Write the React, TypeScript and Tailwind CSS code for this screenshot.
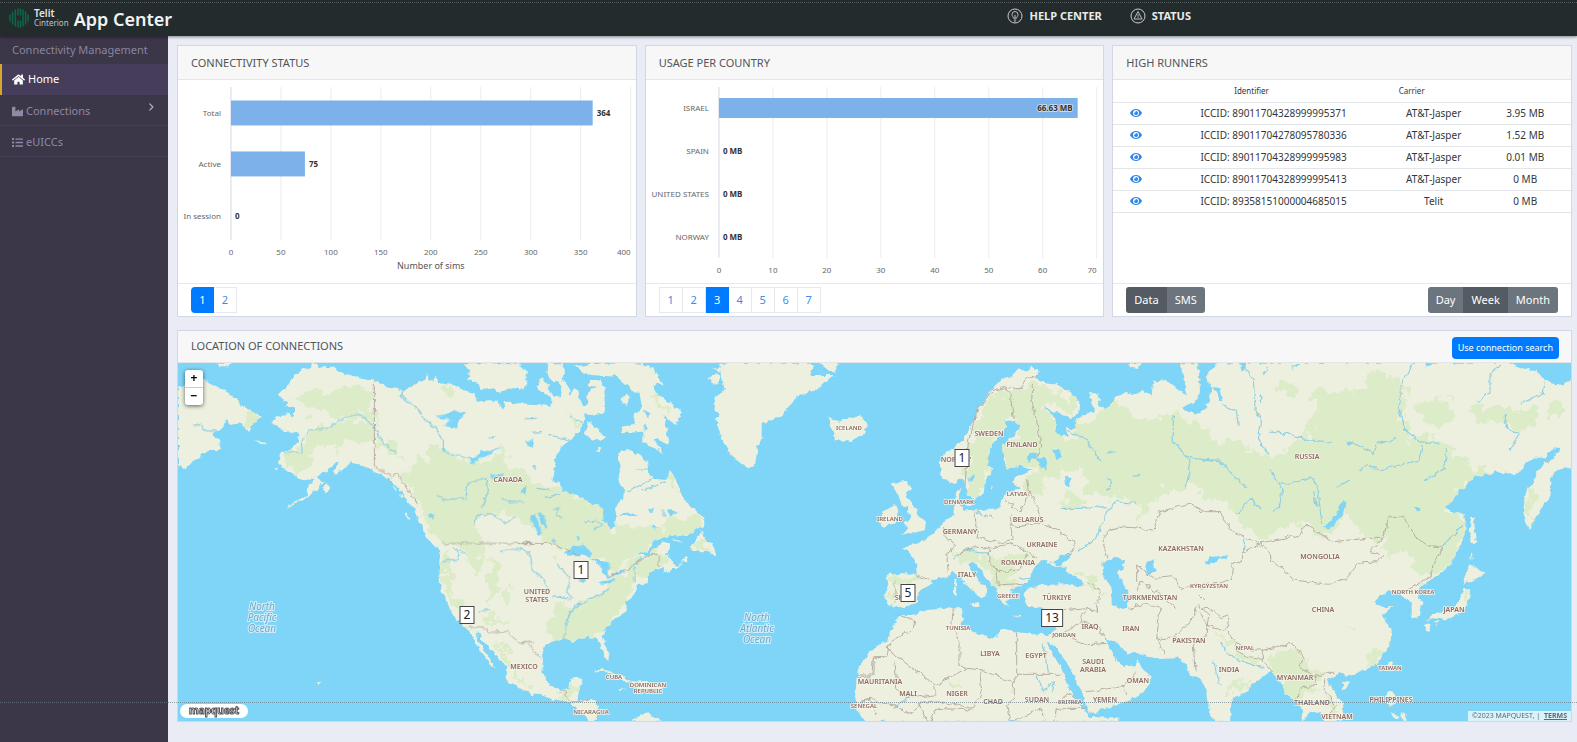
import type { ReactNode } from "react";
import { FaHome, FaIndustry, FaList, FaEye } from "react-icons/fa";
import { FaAngleRight } from "react-icons/fa6";

const WATER = "#7fd5f7";
const RIVER = "#8fcfe3";
const LAND = "#edf0de";
const FOREST = "#dcebc8";
const BORDER = "#b3a8a1";

function Card({ title, action, children, footer }: { title: string; action?: ReactNode; children: ReactNode; footer?: ReactNode }) {
  return (
    <section className="flex min-w-0 flex-col border border-[#d3d7e4] bg-white">
      <header
        className={
          action
            ? "flex h-8 items-center justify-between border-b border-[#e3e5e8] bg-[#f7f7f7] pr-3 pl-[13px]"
            : "flex h-[34px] items-center border-b border-[#e3e5e8] bg-[#f7f7f7] px-[13px] pt-[2px]"
        }
      >
        <h2 className="text-[11px] text-[#50555b]">{title}</h2>
        {action}
      </header>
      {children}
      {footer && <footer className="flex h-[33px] items-center justify-between border-t border-[#e6e8eb] px-[13px]">{footer}</footer>}
    </section>
  );
}

function Pager({ count, current, label }: { count: number; current: number; label: string }) {
  return (
    <nav aria-label={label} className="flex">
      {Array.from({ length: count }, (_, i) => i + 1).map((n) => (
        <button
          key={n}
          type="button"
          className={
            n === current
              ? "h-[26px] w-[23px] bg-[#007bff] text-[11px] text-white first:rounded-l-sm"
              : "h-[26px] w-[23px] border-y border-r border-[#e6e9ed] text-[11px] text-[#3d8ee6] first:w-6 first:border-l"
          }
        >
          {n}
        </button>
      ))}
    </nav>
  );
}

function Toggle({ options, current }: { options: string[]; current: string }) {
  return (
    <div className="flex overflow-hidden rounded-[3px]">
      {options.map((o) => (
        <button
          key={o}
          type="button"
          aria-pressed={o === current}
          className={
            o === current
              ? "h-[26px] bg-[#545b62] px-2 text-[11px] text-white"
              : "h-[26px] bg-[#6c757d] px-2 text-[11px] text-white"
          }
        >
          {o}
        </button>
      ))}
    </div>
  );
}

type Bar = { name: string; y: number; width: number; value: string; inside?: boolean };

function BarChart(props: { x0: number; step: number; bottom: number; ticks: string[]; bars: Bar[]; barHeight: number; title?: string; label: string }) {
  const { x0, step, bottom, ticks, bars, barHeight, title, label } = props;
  const last = ticks.length - 1;
  return (
    <svg viewBox="0 0 458 203" className="block w-full" role="img" aria-label={label} fontSize="8">
      {ticks.map((t, i) => (
        <g key={t}>
          <line x1={x0 + i * step} x2={x0 + i * step} y1="7" y2={bottom} stroke={i === 0 ? "#d5dbe6" : "#ececec"} />
          <text x={x0 + i * step} y={bottom + 15} textAnchor={i === last ? "end" : "middle"} fill="#666">
            {t}
          </text>
        </g>
      ))}
      {bars.map((b) => (
        <g key={b.name}>
          <rect x={x0} y={b.y - barHeight / 2} width={b.width} height={barHeight} fill="#7cb2e9" />
          <text x={x0 - 10} y={b.y + 3} textAnchor="end" fill="#666">
            {b.name}
          </text>
          <text
            x={b.inside ? x0 + b.width - 5 : x0 + b.width + 4}
            y={b.y + 3}
            textAnchor={b.inside ? "end" : "start"}
            fontWeight="700"
            fill="#333"
            stroke={b.inside ? "#c9dcef" : "none"}
            strokeWidth="2"
            paintOrder="stroke"
          >
            {b.value}
          </text>
        </g>
      ))}
      {title && (
        <text x={x0 + (last * step) / 2} y={bottom + 29} textAnchor="middle" fill="#555" fontSize="9">
          {title}
        </text>
      )}
    </svg>
  );
}

const runners = [
  ["ICCID: 89011704328999995371", "AT&T-Jasper", "3.95 MB"],
  ["ICCID: 89011704278095780336", "AT&T-Jasper", "1.52 MB"],
  ["ICCID: 89011704328999995983", "AT&T-Jasper", "0.01 MB"],
  ["ICCID: 89011704328999995413", "AT&T-Jasper", "0 MB"],
  ["ICCID: 89358151000004685015", "Telit", "0 MB"],
];

function Runners() {
  return (
    <table className="w-full table-fixed text-center text-[10px] text-[#33373b]">
      <colgroup>
        <col className="w-[10%]" />
        <col className="w-[50%]" />
        <col className="w-[20%]" />
        <col className="w-[20%]" />
      </colgroup>
      <thead>
        <tr className="h-[22px] border-b border-[#e3e6e9] text-[8px]">
          <td />
          <th className="pr-11 font-normal">Identifier</th>
          <th className="pr-11 font-normal">Carrier</th>
          <td />
        </tr>
      </thead>
      <tbody>
        {runners.map(([id, carrier, amount]) => (
          <tr key={id} className="h-[22px] border-b border-[#e3e6e9]">
            <td>
              <button type="button" aria-label={"View " + id} className="block w-full text-[#2f86ec]">
                <FaEye className="mx-auto text-[12px]" />
              </button>
            </td>
            <td>{id}</td>
            <td>{carrier}</td>
            <td>{amount}</td>
          </tr>
        ))}
      </tbody>
    </table>
  );
}

/* The world map is drawn in four sheets, each at three times the map's scale. */
const sheets = [
  {
    name: "pacific",
    origin: "translate(170 325) scale(.33333)",
    land: [
      "M322 208 345 192 368 160 395 135 425 125 432 113 445 128 480 125 520 145 560 155 612 165 645 185 680 192 700 196 735 178 765 165 770 148 785 170 800 152 805 175 850 180 880 195 915 205 925 230 960 225 980 232 1000 255 1005 230 1040 232 1090 240V1115L1078 1103 1035 1075 1025 1040 1000 1015 960 975 940 945 920 918 925 950 950 985 978 1030 965 1022 930 978 905 932 890 905 860 885 845 860 815 800 808 760 812 700 805 670 770 640 762 620 750 590 735 555 715 530 690 500 665 470 640 450 600 430 560 420 545 408 530 425 515 440 495 450 488 440 510 410 495 412 470 440 440 455 465 470 440 495 400 525 345 552 360 540 410 510 420 480 430 465 400 462 375 455 365 440 340 430 325 410 330 385 360 375 385 350 385 325 350 322 325 310 302 290 325 275 350 270 350 262 372 275 372 250 350 245 350 228Z",
      "M880 115 900 140 890 160 920 175 935 195 975 190 990 205 1030 190 1060 190 1075 170 1055 160 1075 140 1055 130 1050 115Z",
      "M24 185 50 180 80 165 105 165 150 190 200 220 220 245 240 255 275 275 265 290 245 300 238 322 225 305 205 295 180 300 165 280 160 310 140 320 130 330 145 345 155 375 120 375 80 400 45 432 24 420Z",
      "M145 113H190L175 124 150 124ZM255 345 285 350 290 358 270 356ZM455 490 470 478 482 485 468 502ZM312 430 326 428 324 437ZM705 560 718 572 715 585ZM765 620 810 640 825 655 820 665 790 650ZM440 1072 450 1075 446 1084ZM668 480 680 498 675 500ZM690 505 700 520 694 522Z",
    ],
    forest: [
      "M360 205 430 210 500 200 545 180 590 195 608 230 610 290 570 270 520 280 470 260 420 255 380 235Z",
      "M410 320 470 310 545 275 608 300 605 350 560 350 500 370 450 360 420 385 430 440 390 450 335 400 365 380 395 375 400 340Z",
      "M765 365 830 385 900 410 980 390 1005 370 1020 415 1060 430 1090 480V600L1050 580 1000 570 930 560 915 600 940 650 930 660 945 700 920 740 890 720 870 680 820 660 780 615 750 560 740 520 700 480 690 455 720 440 730 410 780 410Z",
      "M820 680 850 700 840 760 850 800 870 830 850 840 830 800 815 760ZM955 710 980 730 985 770 975 800 965 860 950 820 960 770ZM1000 785 1025 785 1020 830 1000 845 990 810ZM225 260 270 275 240 318 228 300ZM820 180 850 180 850 215 830 220ZM970 940 1000 965 1040 1030 1070 1090 1040 1070 1000 1000ZM620 310 650 350 700 370 690 400 650 390 620 340ZM950 870 1010 890 1020 910 980 900Z",
    ],
    water: ["M800 275 830 270 850 255 885 265 870 285 860 310 820 300 845 285 810 282ZM890 400 920 395 930 375 960 378 990 365 970 385 930 400 910 415ZM1050 500 1070 480 1065 510ZM1065 350 1090 345 1085 370ZM950 340 975 332 970 342ZM770 570 795 568 785 580ZM960 450 1000 445 990 458 965 462ZM990 205 1030 195 1000 215Z"],
    river: "M345 385 395 380 400 340 420 315 470 310 520 280 560 265 610 300 640 355 680 385M740 158 705 180 690 215 735 240 760 280 800 310 820 350 820 378 890 400M910 600 920 575 960 565 1005 595 1040 575M885 520 890 480 950 455 955 500 935 545M800 510 820 525 880 518M815 710 870 705 855 670 890 690M990 680 1040 670 1080 682M925 858 960 855M1000 525 1060 532M70 300 90 300 110 318 140 318",
    border: "M613 165V425L650 445 665 455 680 440 710 490 735 520 742 550M820 655H1090M893 905 940 910 960 922 1010 920 1050 955 1090 950",
  },
  {
    name: "atlantic",
    origin: "translate(520 325) scale(.33333)",
    land: [
      "M-20 232 0 235 60 238 90 245 95 225 80 205 60 195 50 185 65 160 85 180 90 205 105 215 120 210 125 180 115 170 90 165 83 140 85 115H130L132 150 125 165 145 180 150 210 162 190 175 195 180 225 190 240 200 240 205 200 225 185 205 180 210 165 240 165 255 185 250 200 255 235 250 262 215 270 195 268 190 300 178 320 150 345 130 355 105 400 103 440 100 470 118 470 130 500 175 510 210 535 245 545 250 580 270 612 285 600 290 570 285 550 310 520 312 490 295 465 300 440 295 380 330 375 350 385 385 410 388 450 405 462 440 465 450 435 470 465 485 510 505 540 550 575 550 605 500 630 430 635 400 650 385 675 350 690 390 690 400 670 430 650 450 655 450 670 440 685 450 700 465 720 490 710 440 745 430 740 435 725 425 725 385 745 383 775 350 780 345 800 325 830 315 820 318 860 285 880 260 910 245 935 255 955 268 985 265 1005 250 990 240 950 230 940 200 935 160 950 130 940 95 950 72 965 65 1000 72 1050 85 1075 120 1095 145 1090 155 1060 190 1058 180 1085 172 1125 225 1125 235 1145 225 1190H205L200 1175 170 1150 140 1130 100 1122 60 1110 0 1090 -40 1072Z",
      "M600 113 612 190 590 215 580 250 600 270 585 285 600 320 612 360 640 400 690 430 705 420 712 370 725 340 725 295 790 270 830 215 890 195 940 150 870 150 880 130 870 113ZM895 113 950 113 948 140 925 135ZM565 160 590 145 605 155 590 180ZM575 128 605 130 600 142Z",
      "M165 120 270 113 360 113 375 130 400 130 420 170 400 185 420 215 450 235 485 260 470 300 450 290 430 270 440 310 445 360 400 340 430 385 370 350 370 320 300 325 305 305 340 300 345 270 365 250 355 205 325 185 290 155 210 150 185 140Z",
      "M-20 120 0 130 25 155 15 165 0 195 -15 185ZM305 215 325 212 325 240 308 238ZM205 285 225 310 262 335 235 345 215 350 195 320ZM228 378 240 365 248 368 235 382ZM515 665 545 615 555 650 580 655 588 690 570 690 555 678 515 680ZM455 640 485 650 475 655ZM485 708 500 695 502 712ZM355 118 385 122 400 140 425 180 400 178 365 145Z",
      "M925 275 945 285 960 290 990 280 1020 270 1042 300 1030 325 990 350 950 345 940 320 928 300Z",
      "M218 1042 245 1033 300 1050 335 1068 315 1072 280 1050 250 1040ZM335 1070 380 1068 430 1085 400 1098 340 1090ZM295 1092 315 1095 300 1098ZM335 1190 360 1172 385 1165 410 1180 420 1190ZM350 110 362 130 370 115Z",
      "M1090 950 1080 960 1030 1020 1010 1060 1015 1120 1005 1140 1035 1190H1090Z",
    ],
    forest: [
      "M-20 460 60 480 130 500 175 515 205 535 240 548 248 580 270 615 300 605 380 600 440 590 520 570 548 580 545 603 500 628 430 632 400 648 385 672 345 690 310 725 275 740 250 705 210 690 180 650 120 680 85 650 60 640 30 600 -20 590Z",
      "M100 665 145 680 130 700 105 690ZM345 700 400 690 445 680 440 700 430 720 380 745 380 772 345 778 320 820 300 860 270 890 240 930 160 945 95 945 90 880 100 850 160 840 200 820 240 800 280 760 320 745ZM520 670 545 622 552 655 578 660 585 680 560 678ZM390 200 440 235 445 260 410 245ZM445 440 470 470 480 510 450 480ZM140 270 180 290 170 308 145 285ZM120 1100 160 1070 180 1075 165 1120Z",
    ],
    water: [
      "M130 690 160 665 190 660 215 680 215 698 180 690 150 692ZM180 770 185 715 200 710 202 735 195 775ZM215 705 250 705 275 725 262 735 265 760 245 745 240 720ZM235 775 280 760 285 768 245 780ZM275 748 310 738 318 744 280 752Z",
      "M28 575 48 568 55 595 70 625 60 635 40 600ZM55 565 70 570 82 610 75 615ZM95 648 108 645 105 658ZM165 635 178 638 172 648ZM385 548 400 545 398 565 388 562ZM440 555 470 558 450 572ZM300 568 350 565 345 572 310 573ZM400 605 412 603 405 618ZM370 258 395 265 380 280ZM370 300 382 308 372 318ZM18 350 32 348 25 368ZM40 420 50 420 45 440Z",
    ],
    river: "M0 670 30 690 40 740 70 760 85 800M110 715 150 760 140 800 155 820M100 815 150 822M130 940 145 880 165 840 240 810 270 790M135 900 150 860 190 830M345 770 345 720 400 670M320 500 400 462M370 495 440 470M350 435 388 435M75 520 120 505M50 490 90 495M190 590 230 585 250 600 220 615M15 282 50 280M35 322 65 320M85 328 145 345M150 275 190 295M100 555 120 545 110 570 125 580M425 550 435 575",
    border: "M-10 655H85L120 665 180 690M262 755 330 730 350 712 400 685 415 690 415 720 430 722M0 950 20 948 60 1000M110 1105 130 1095 150 1130 175 1130 210 1125M1090 995H1062V1050H1010M1015 1130 1060 1120 1080 1140",
  },
  {
    name: "europe",
    origin: "translate(840 325) scale(.33333)",
    land: [
      "M300 400 330 375 370 345 400 290 420 245 445 205 480 170 520 150 535 130 560 140 575 122 600 140 580 165 600 200 530 285 500 288 490 320 460 350 445 380 445 420 460 430 435 470 430 510 405 520 385 510 370 460 340 475 315 465 300 440Z",
      "M510 200 580 160 620 175 650 180 690 200 718 230 715 265 690 278 650 262 615 248 640 270 650 300 645 320 665 335 685 335 675 310 705 310 710 285 740 265 765 262 755 240 750 205 775 205 780 225 770 240 800 250 840 210 860 200 885 210 905 195 935 210 940 170 970 165 1010 185 1040 215 1030 160 1020 115H1140V1190H1125L1110 1130 1085 1060 1050 1055 1040 1020 1010 1000 940 1003 900 985 860 985 840 960 815 945 800 940 815 980 835 1010 850 1025 880 1020 895 1005 905 1030 935 1055 920 1090 870 1125 800 1150 755 1165 745 1160 735 1120 700 1050 665 990 640 955 620 955 640 990 670 1040 690 1100 720 1140 750 1175 800 1178 835 1175V1190H75L60 1150 45 1120 50 1060 60 1020 100 970 140 950 160 900 180 870 215 870 260 855 335 850 365 850 370 880 360 900 395 920 440 935 470 940 485 910 530 920 580 928 620 930 640 925 650 900 660 855 600 850 565 845 550 810 560 790 610 780 670 778 735 785 725 765 690 745 675 725 650 725 625 710 600 705 575 740 565 775 530 785 510 790 515 820 495 830 505 850 480 820 470 790 440 760 410 720 400 710 385 720 400 750 440 790 440 810 425 820 400 800 360 760 340 740 320 760 275 765 270 780 235 800 230 830 190 850 175 845 140 840 135 800 145 780 140 750 200 745 230 750 228 710 190 665 235 655 280 625 310 590 340 570 345 510 360 490 355 520 370 560 410 555 480 550 490 510 505 500 540 490 520 475 525 455 580 435 545 425 500 430 490 400 490 360 525 330 538 300 515 280Z",
      "M155 475 200 468 215 490 195 510 215 530 235 570 258 590 255 615 220 625 185 632 205 610 190 590 210 575 200 550 185 540 175 510ZM130 555 165 540 175 560 165 595 130 605 115 590ZM-10 300 0 290 20 280 60 272 82 300 70 325 30 350 -10 342Z",
      "M340 765 352 762 350 780 342 782ZM338 785 352 785 350 815 340 812ZM390 835 418 832 420 842 410 850ZM515 872 540 872 540 878ZM605 868 630 862 620 872ZM380 530 400 532 395 545 380 542ZM450 485 458 483 455 500ZM865 115H905L895 132 872 128Z",
    ],
    forest: [
      "M430 235 490 205 525 200 570 180 620 178 690 210 712 250 690 270 620 245 645 285 660 335 690 335 712 290 800 255 850 235 880 290 940 270 1000 270 1060 290 1140 350V500L1060 480 980 490 950 520 905 600 890 520 830 520 780 510 745 510 735 450 690 430 620 470 600 500 555 500 530 470 590 435 560 420 500 425 495 360 530 320 535 290 500 285 490 320 455 350 440 420 430 500 390 510 375 450 400 330Z",
      "M320 690 380 675 430 680 455 710 470 745 430 730 400 705 350 700ZM150 755 230 755 265 765 230 770 150 770ZM690 740 740 760 790 800 780 810 740 780ZM440 720 520 670 570 690 545 740 500 745 560 780 510 785 470 780ZM660 520 720 510 745 540 700 555 660 550ZM330 1065 370 1070 360 1095 335 1085ZM145 790 160 790 155 835 142 830Z",
    ],
    water: [
      "M787 715 825 695 855 705 850 735 830 740 850 780 868 800 865 845 850 852 815 840 815 790 790 750ZM640 712 660 690 695 688 680 705 655 722ZM590 400 610 395 625 415 615 430 598 425ZM640 375 660 375 665 400 650 405ZM920 710 940 705 948 740 925 750 915 735ZM565 380 590 385 590 400 565 410ZM385 455 405 450 400 465 385 470ZM675 455 695 460 690 490 678 480ZM1095 710 1140 695 1140 702 1105 722Z",
      "M1085 110H1140L1100 150 1112 190 1100 225 1070 262 1045 262 1025 245 1060 235 1085 200Z",
    ],
    river: "M680 315 740 345 780 410M1000 270 1000 350 1045 400 1050 440 1035 490M1045 400 1140 405M710 680 770 640 800 560 830 530 890 535M660 550 720 550 800 545M535 760 600 755M590 1050 610 1100 640 1070 635 1100M625 1045 620 1000 605 955M800 385 825 380M880 455 900 450M1120 1010 1140 1080M160 1150 215 1110M340 700 380 670 450 690M410 560 460 580M800 460 815 470 800 500",
    border: "M375 480 385 350 410 260 450 205 490 185 510 205 520 280M490 185 540 195 560 155 590 155M580 180 575 220 590 290 605 360 590 400M490 520 540 560 560 520 570 500 590 540 610 590 540 605 515 600 510 570M565 500 560 460M510 600 520 640 480 655 410 635 405 560M520 655 560 680 590 700M610 600 660 615 680 640 705 650 705 670 680 690M310 600 320 640 345 660 320 690 325 740M350 690 400 665 450 670 520 655M450 670 445 710 480 740 540 735 560 690M470 730 475 780 555 775M230 750 268 765M165 770 165 835M145 975 285 1080 380 1030 430 1035 520 1075 520 1125 500 1140 510 1190M165 1010 170 1090 200 1120 285 1110 285 1085M530 920V1048H665M530 1048 520 1075M340 850 335 900 360 950 360 1020 380 1030M175 870 225 885 220 910 150 950 140 995 100 1000 95 1055 50 1058M100 1130 165 1140 210 1170 240 1135 300 1130 400 1150 425 1100 420 1040M660 855 740 848 770 860 765 830M740 848 720 890 680 920 655 930M720 890 770 900 800 945M680 925 730 960 800 955M740 1100 850 1085 890 1040M850 1085 860 1110M775 835 780 800 745 770M790 650 800 620 850 605 940 615 960 560 1050 535 1100 560 1140 560M790 650 800 700M890 770 890 720 940 760 1000 755 1020 790 1070 780 1140 775M868 850 920 835 960 850 950 940 975 990M950 940 1000 940 1050 890 1075 840 1110 870 1100 930 1060 960 1065 1040M890 800 900 770 950 800 1010 850M520 1190 600 1150 620 1190M660 1130 680 1105 720 1130M640 1190 650 1150 740 1150M270 1190 290 1150 400 1155M45 1140 90 1120 110 1170M240 1135 260 1190",
  },
  {
    name: "asia",
    origin: "translate(1200 325) scale(.33333)",
    land: [
      "M20 113H925L960 130 1010 135 1030 165 1075 178 1120 165V425L1075 435 1050 465 1055 510 1030 540 1000 590 985 615 970 560 975 510 1000 460 1040 400 1030 395 1000 395 975 420 950 450 900 440 820 455 790 490 735 545 760 560 790 570 800 600 780 670 740 735 700 758 690 765 670 780 650 800 665 840 660 875 635 880 635 840 615 820 600 800 570 795 530 820 530 835 555 850 580 845 550 870 575 920 570 960 530 1020 480 1040 440 1055 430 1045 405 1050 385 1065 400 1100 430 1140 425 1190H370L365 1165 330 1160 310 1190 305 1150 280 1120 260 1110 240 1070 215 1040 185 1055 130 1105 95 1120 90 1190H40L20 1120Z",
      "M815 570 825 580 822 620 832 650 818 660 808 620ZM812 675 820 690 815 705ZM808 718 850 745 830 765 800 770 790 780ZM795 785 810 800 800 850 770 870 740 885 700 880 680 885 700 870 730 860 770 840 785 810ZM672 900 692 895 688 920 678 918ZM700 890 715 888 710 900ZM425 1075 450 1070 440 1092 428 1090ZM562 1010 580 1012 570 1040ZM562 1095 580 1100 585 1130 570 1150 560 1120ZM575 1160 600 1180 580 1178ZM600 1165 620 1170 615 1190Z",
    ],
    forest: [
      "M0 345 100 350 180 380 220 400 330 320 350 270 335 200 390 200 480 210 490 150 560 135 615 170 610 220 600 290 630 340 700 330 780 400 820 430 895 440 820 455 790 488 735 545 790 575 798 600 780 670 735 733 695 755 640 760 640 700 620 660 560 690 550 640 490 640 470 600 440 560 400 640 345 620 280 600 170 640 130 610 100 560 0 500Z",
      "M225 185 260 165 285 190 250 215ZM660 230 760 225 760 270 720 300 670 280ZM800 250 860 250 900 260 1000 250 1005 290 960 325 900 300 840 285ZM1030 240 1060 220 1090 260 1060 275ZM985 500 1010 460 1000 530 990 600 975 560ZM500 1000 560 960 540 1000 510 1020ZM200 1000 280 960 310 1000 350 1040 330 1100 300 1140 260 1110 230 1050ZM70 1100 120 1070 160 1060 120 1100ZM60 920 120 980 200 1010 150 1020 70 960ZM640 700 690 690 690 760 640 760ZM370 1100 420 1150 420 1190 400 1180ZM790 800 805 800 795 845 780 840ZM435 915 460 915 460 930Z",
    ],
    water: [
      "M365 610 400 580 430 525 440 530 425 575 390 610ZM-5 110H20L22 180 40 190 20 240 0 265 -20 265 0 200ZM15 710 35 695 80 692 80 700 35 705 22 722ZM1060 370 1078 372 1060 405 1040 415 1030 405ZM120 113H132L135 140 125 140ZM670 113H695L680 128ZM640 550 662 548 650 560ZM435 350 462 355 450 362ZM40 185 60 190 70 225 60 225Z",
    ],
    river: "M125 115 160 165 165 250 185 290 175 340 205 390M210 318 260 325 330 345 400 352M440 352 490 365 520 385 535 355 590 340M640 115 610 170 595 240 610 310 660 350 715 355M670 360 660 405 540 435 500 420 475 440M740 370 735 430 670 468M410 487 450 465M0 405 60 410 135 485M240 480 340 460 355 500 365 600M210 430 245 490 240 540 220 560M340 500 355 545 340 520M900 120 870 150 870 200 835 235M1035 170 1030 205 965 235M915 270 920 310 955 330 930 375M205 120 190 150M180 210 185 230M70 240 110 260 115 305M790 600 740 650 725 665M110 570 150 520 180 555M65 950 80 985 130 1010 190 1030M300 120 275 130M135 640 130 680",
    border: "M-10 560 50 555 100 620 175 655 200 650 300 630 315 600 350 620 400 650 500 640 550 640 510 680 550 690 530 710 475 715 440 760 385 778 280 765 250 730 215 710 210 685 180 655 130 680 120 710 95 720 100 760 40 780 0 790M550 640 565 580 610 572 650 640 690 665 725 668 700 720 690 755M690 755 650 780 610 800M0 850 30 850 60 880 80 870 90 890 75 915 20 900 0 860M80 920 105 950 150 975 195 975 270 955 290 965M190 975 190 1010 215 1040M290 965 310 1000 300 1025 345 1055 370 1045 400 1045M345 1055 350 1080 300 1090 290 1120M375 1060 370 1090 410 1140 390 1165M20 830 0 810M110 950 100 970 140 995 190 1000",
  },
];

const labels: [number, number, string][] = [
  [508, 482, "CANADA"], [537, 594, "UNITED"], [537, 602, "STATES"], [524, 669, "MEXICO"], [614, 679, "CUBA"], [648, 687, "DOMINICAN"], [648, 693, "REPUBLIC"],
  [591, 714, "NICARAGUA"], [849, 430, "ICELAND"], [989, 436, "SWEDEN"], [1022, 447, "FINLAND"], [956, 462, "NORWAY"], [1017, 496, "LATVIA"],
  [959, 504, "DENMARK"], [890, 521, "IRELAND"], [1028, 522, "BELARUS"], [960, 534, "GERMANY"], [1042, 547, "UKRAINE"], [1018, 565, "ROMANIA"],
  [967, 577, "ITALY"], [1008, 598, "GREECE"], [1057, 600, "TÜRKIYE"], [905, 600, "SPAIN"], [958, 630, "TUNISIA"], [990, 656, "LIBYA"], [1036, 658, "EGYPT"],
  [1090, 629, "IRAQ"], [1131, 631, "IRAN"], [1064, 637, "JORDAN"], [1093, 664, "SAUDI"], [1093, 672, "ARABIA"], [1138, 683, "OMAN"], [1105, 702, "YEMEN"],
  [880, 684, "MAURITANIA"], [908, 696, "MALI"], [957, 696, "NIGER"], [993, 704, "CHAD"], [1037, 702, "SUDAN"], [1070, 704, "ERITREA"], [864, 708, "SENEGAL"],
  [1181, 551, "KAZAKHSTAN"], [1150, 600, "TURKMENISTAN"], [1209, 588, "KYRGYZSTAN"], [1189, 643, "PAKISTAN"], [1307, 459, "RUSSIA"], [1320, 559, "MONGOLIA"],
  [1323, 612, "CHINA"], [1413, 594, "NORTH KOREA"], [1454, 612, "JAPAN"], [1245, 650, "NEPAL"], [1229, 672, "INDIA"], [1295, 680, "MYANMAR"],
  [1390, 670, "TAIWAN"], [1391, 702, "PHILIPPINES"], [1312, 705, "THAILAND"], [1337, 719, "VIETNAM"],
];
const small = new Set(["CUBA", "DOMINICAN", "REPUBLIC", "NICARAGUA", "ICELAND", "LATVIA", "DENMARK", "IRELAND", "GREECE", "TUNISIA", "JORDAN", "ERITREA", "SENEGAL", "KYRGYZSTAN", "NORTH KOREA", "NEPAL", "TAIWAN"]);

const oceans: [number, number, string[]][] = [
  [262, 610, ["North", "Pacific", "Ocean"]],
  [757, 621, ["North", "Atlantic", "Ocean"]],
];

const markers = [
  { x: 467, y: 615, n: 2 },
  { x: 581, y: 570, n: 1 },
  { x: 908, y: 593, n: 5 },
  { x: 1052, y: 618, n: 13 },
  { x: 962, y: 458, n: 1 },
];

function WorldMap() {
  return (
    <div className="relative aspect-[1393/358] w-full overflow-hidden bg-[#7fd5f7]">
      <svg viewBox="178 363 1393 358" className="block h-full w-full" role="img" aria-label="World map">
        <defs>
          <filter id="coast" x="0" y="0" width="100%" height="100%">
            <feTurbulence type="fractalNoise" baseFrequency="0.16" numOctaves="2" seed="4" result="n" />
            <feDisplacementMap in="SourceGraphic" in2="n" scale="6" xChannelSelector="R" yChannelSelector="G" />
          </filter>
          <filter id="woods" x="0" y="0" width="100%" height="100%">
            <feTurbulence type="fractalNoise" baseFrequency="0.07" numOctaves="3" seed="9" result="n" />
            <feDisplacementMap in="SourceGraphic" in2="n" scale="26" xChannelSelector="R" yChannelSelector="G" />
          </filter>
          <clipPath id="shore">
            {sheets.map((s) => (
              <path key={s.name} transform={s.origin} d={s.land.join("")} />
            ))}
          </clipPath>
        </defs>
        <g filter="url(#coast)">
          <rect x="160" y="350" width="1430" height="390" fill={WATER} />
          {sheets.map((s) => (
            <path key={s.name} transform={s.origin} d={s.land.join("")} fill={LAND} />
          ))}
          <g clipPath="url(#shore)">
            <g filter="url(#woods)">
              {sheets.map((s) => (
                <path key={s.name} transform={s.origin} d={s.forest.join("")} fill={FOREST} />
              ))}
            </g>
          </g>
          {sheets.map((s) => (
            <g key={s.name} transform={s.origin}>
              <path d={s.water.join("")} fill={WATER} />
              <path d={s.river} fill="none" stroke={RIVER} strokeWidth="3.5" />
              <path d={s.border} fill="none" stroke={BORDER} strokeWidth="2.8" />
            </g>
          ))}
        </g>
        <g textAnchor="middle" fill="#8d6a61" stroke="#f6f4ea" strokeWidth="1.5" paintOrder="stroke">
          {labels.map(([x, y, t]) => (
            <text key={t + y} x={x} y={y} fontSize={small.has(t) ? 6 : 7} fontWeight="600">
              {t}
            </text>
          ))}
        </g>
        <g textAnchor="middle" fill="#6fa9c4" stroke="#d3eefa" strokeWidth="2" paintOrder="stroke" fontSize="10" fontStyle="italic">
          {oceans.map(([x, y, words]) =>
            words.map((w, i) => (
              <text key={w + x} x={x} y={y + i * 11}>
                {w}
              </text>
            )),
          )}
        </g>
      </svg>
      <div className="absolute top-[7px] left-[7px] flex w-[18px] flex-col rounded-[3px] bg-white shadow-[0_1px_4px_rgba(0,0,0,0.6)]">
        <button type="button" aria-label="Zoom in" className="h-[18px] border-b border-[#ccc] text-[12px] leading-none font-bold text-black">+</button>
        <button type="button" aria-label="Zoom out" className="h-[17px] text-[12px] leading-none font-bold text-black">−</button>
      </div>
      {markers.map((m) => (
        <button
          key={m.x}
          type="button"
          className="absolute h-[18px] min-w-[15px] -translate-x-1/2 -translate-y-1/2 border border-[#444] bg-white px-[3px] text-[12px] leading-none text-[#222]"
          style={{ left: ((m.x - 178) / 1393) * 100 + "%", top: ((m.y - 363) / 358) * 100 + "%" }}
        >
          {m.n}
        </button>
      ))}
      <span className="absolute bottom-[3px] left-[2px] flex h-[14px] w-[68px] items-center justify-center rounded-full bg-white">
        <svg viewBox="0 0 64 14" className="h-[14px] w-16" role="img" aria-label="mapquest">
          <text x="32" y="10" textAnchor="middle" fontSize="10" fontWeight="700" fill="#fff" stroke="#555" strokeWidth="1">
            mapquest
          </text>
        </svg>
      </span>
      <p className="absolute right-0 bottom-0 flex h-[10px] items-center gap-1 bg-white/70 px-1 text-[7px] leading-none text-[#666]">
        ©2023 MAPQUEST, |
        <a href="#terms" className="font-bold underline">TERMS</a>
      </p>
    </div>
  );
}

function HelpIcon() {
  return (
    <svg viewBox="0 0 16 16" className="h-4 w-4" fill="none" stroke="#c9cecf" aria-hidden="true">
      <circle cx="8" cy="8" r="7" />
      <path d="M6.500 10.200C6.500 9 5 8.300 5 6.500A3 3 0 0 1 11 6.500C11 8.300 9.500 9 9.500 10.200ZM8 10V6.800M6.800 12H9.200M7.300 13.300H8.700" strokeWidth=".9" />
    </svg>
  );
}

function StatusIcon() {
  return (
    <svg viewBox="0 0 16 16" className="h-4 w-4" fill="none" stroke="#c9cecf" aria-hidden="true">
      <circle cx="8" cy="8" r="7" />
      <path d="M8 3.500 12 11H4ZM8 6.300V8.800M8 9.400V10.200" strokeWidth=".9" />
    </svg>
  );
}

function Logo() {
  return (
    <svg viewBox="0 0 20 20" className="h-5 w-5" stroke="#0d6446" strokeWidth="1.600" strokeLinecap="round" aria-hidden="true">
      <path d="M1 7V13M3.600 4V16M6.300 2V18M9 1V7M9 13V19M11.500 1V7M11.500 13V19M14 2V18M16.600 4V16M19 7V13" />
    </svg>
  );
}

export default function App() {
  return (
    <div className="relative flex min-h-screen flex-col bg-[#e9ecf4] font-['Noto_Sans','Open_Sans',sans-serif] text-[#33373b]">
      <header className="z-10 flex h-9 items-center justify-between bg-[#232b2c] pr-[386px] pl-[9px] shadow-[0_1px_3px_rgba(0,0,0,0.45)]">
        <div className="flex items-center gap-[5px]">
          <Logo />
          <div className="flex flex-col text-[#e3e6e6]">
            <span className="text-[10px] leading-[10px] font-semibold">Telit</span>
            <span className="text-[8px] leading-[10px] text-[#bfc4c4]">Cinterion</span>
          </div>
          <h1 className="pt-[2px] text-[18px] leading-none font-semibold text-[#f1f3f3]">App Center</h1>
        </div>
        <nav className="flex gap-7 pb-1 text-[11px] font-bold text-[#e8ebeb]" aria-label="Support">
          <a href="#help" className="flex items-center gap-[6px]"><HelpIcon />HELP CENTER</a>
          <a href="#status" className="flex items-center gap-[6px]"><StatusIcon />STATUS</a>
        </nav>
      </header>

      <div className="flex flex-1">
        <aside className="w-[168px] shrink-0 bg-[#3b3648] text-[11px] text-[#8e89a4]">
          <p className="flex h-7 items-center pl-3 text-[#8a859f]">Connectivity Management</p>
          <nav aria-label="Main">
            <a href="#home" className="flex h-[31px] items-center gap-[3px] border-l-2 border-[#d5a72c] bg-[#453d59] pl-[10px] text-white">
              <FaHome className="text-[13px]" />Home
            </a>
            <a href="#connections" className="flex h-[31px] items-center gap-[3px] border-b border-[#443e52] pt-[2px] pr-3 pl-3">
              <FaIndustry className="text-[11px]" />Connections
              <FaAngleRight className="mb-2 ml-auto text-[10px] text-[#b5b0c6]" />
            </a>
            <a href="#euiccs" className="flex h-[31px] items-center gap-[3px] border-b border-[#443e52] pt-[2px] pl-3">
              <FaList className="text-[11px]" />eUICCs
            </a>
          </nav>
        </aside>

        <main className="flex min-w-0 flex-1 flex-col gap-[13px] pt-[9px] pr-[5px] pl-[9px]">
          <div className="grid grid-cols-3 gap-2">
            <Card title="CONNECTIVITY STATUS" footer={<Pager count={2} current={1} label="Connectivity status pages" />}>
              <BarChart
                label="Number of sims by status"
                x0={53}
                step={50}
                bottom={160}
                barHeight={25}
                ticks={["0", "50", "100", "150", "200", "250", "300", "350", "400"]}
                title="Number of sims"
                bars={[
                  { name: "Total", y: 33, width: 362, value: "364" },
                  { name: "Active", y: 84, width: 74, value: "75" },
                  { name: "In session", y: 136, width: 0, value: "0" },
                ]}
              />
            </Card>
            <Card title="USAGE PER COUNTRY" footer={<Pager count={7} current={3} label="Usage pages" />}>
              <BarChart
                label="Usage per country in MB"
                x0={73}
                step={54}
                bottom={178}
                barHeight={20}
                ticks={["0", "10", "20", "30", "40", "50", "60", "70"]}
                bars={[
                  { name: "ISRAEL", y: 28, width: 359, value: "66.63 MB", inside: true },
                  { name: "SPAIN", y: 71, width: 0, value: "0 MB" },
                  { name: "UNITED STATES", y: 114, width: 0, value: "0 MB" },
                  { name: "NORWAY", y: 157, width: 0, value: "0 MB" },
                ]}
              />
            </Card>
            <Card
              title="HIGH RUNNERS"
              footer={
                <>
                  <Toggle options={["Data", "SMS"]} current="Data" />
                  <Toggle options={["Day", "Week", "Month"]} current="Week" />
                </>
              }
            >
              <div className="flex-1">
                <Runners />
              </div>
            </Card>
          </div>
          <Card
            title="LOCATION OF CONNECTIONS"
            action={
              <div className="pt-[3px]">
                <button type="button" className="block h-[22px] rounded-sm bg-[#007bff] px-[6px] text-[9px] text-white">
                  Use connection search
                </button>
              </div>
            }
          >
            <WorldMap />
          </Card>
        </main>
      </div>
      <div className="pointer-events-none absolute inset-x-0 top-[2px] z-20 border-t border-dotted border-[#6a7172]/70" />
      <div className="pointer-events-none absolute inset-x-0 bottom-[39px] border-t border-dotted border-[#6b7a86]/70" />
    </div>
  );
}
